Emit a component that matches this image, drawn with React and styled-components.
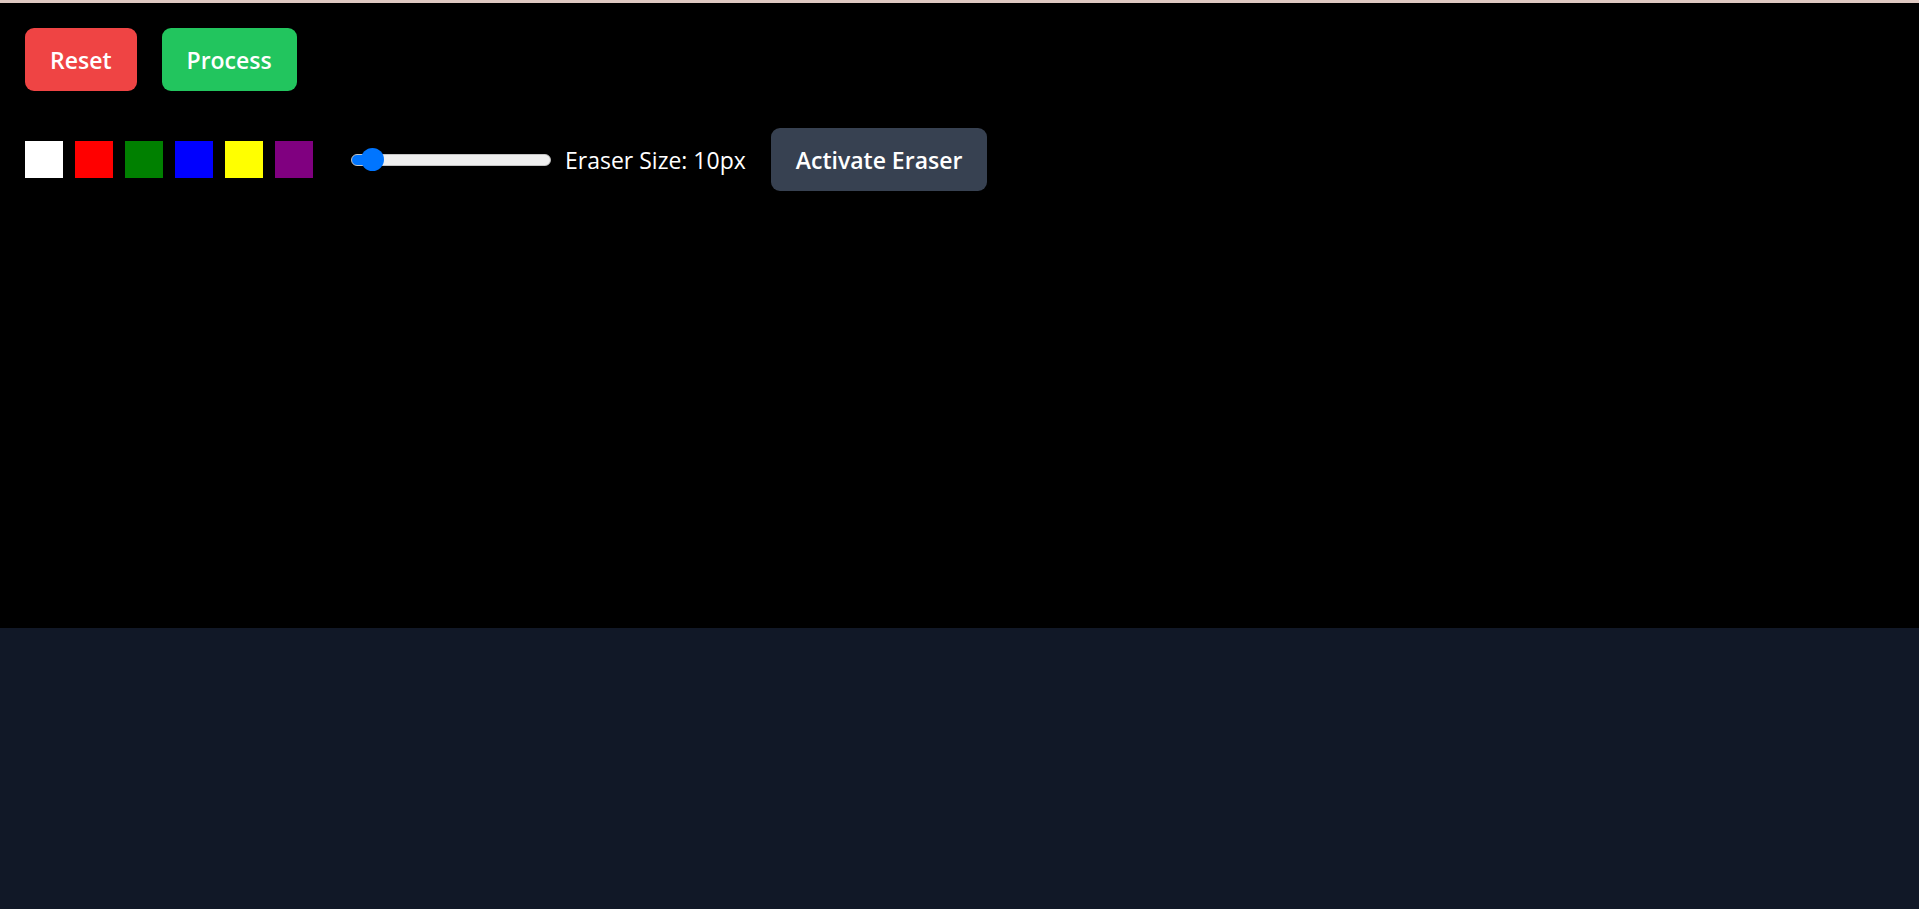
import React, { useState } from "react";
import styled, { createGlobalStyle } from "styled-components";

const colors = ["#ffffff", "#ff0000", "#008000", "#0000ff", "#ffff00", "#800080"];

const GlobalStyle = createGlobalStyle`
  * {
    box-sizing: border-box;
  }
  body {
    margin: 0;
    background: #111827;
    font-family: "Open Sans", "Noto Sans", sans-serif;
  }
`;

const App = () => {
  // eraser size in px, slider goes from 5 to 100
  const [eraserSize, setEraserSize] = useState(10);
  const [color, setColor] = useState("#ffffff");
  const [eraser, setEraser] = useState(false);

  const fill = ((eraserSize - 5) / 95) * 177 + 11.5;

  return (
    <Page>
      <GlobalStyle />
      <Board>
        <ActionRow>
          <ActionButton $bg="#ef4444">Reset</ActionButton>
          <ActionButton $bg="#22c55e">Process</ActionButton>
        </ActionRow>
        <ToolRow>
          {colors.map((c) => (
            <Swatch
              key={c}
              $color={c}
              aria-label={c}
              onClick={() => setColor(c)}
            />
          ))}
          <Slider
            type="range"
            min={5}
            max={100}
            value={eraserSize}
            $fill={fill}
            onChange={(e) => setEraserSize(Number(e.target.value))}
          />
          <SizeLabel>Eraser Size: {eraserSize}px</SizeLabel>
          <ActionButton $bg="#374151" onClick={() => setEraser(!eraser)}>
            {eraser ? "Deactivate Eraser" : "Activate Eraser"}
          </ActionButton>
        </ToolRow>
      </Board>
    </Page>
  );
};

// page wrapper
const Page = styled.div`
  min-height: 100vh;
  border-top: 3px solid #dfc9c2;
  background: #111827;
`;

// black drawing area with the toolbar on top
const Board = styled.div`
  height: 625px;
  background: #000;
  padding: 25px 25px 0;
  display: flex;
  flex-direction: column;
  gap: 37px;
`;

const ActionRow = styled.div`
  display: flex;
  gap: 25px;
`;

const ToolRow = styled.div`
  display: flex;
  align-items: center;
  gap: 12px;
`;

const ActionButton = styled.button`
  height: 63px;
  padding: 0 25px;
  border: none;
  border-radius: 9px;
  background: ${(p) => p.$bg};
  color: #fff;
  font-family: inherit;
  font-size: 23px;
  font-weight: 600;
  cursor: pointer;
`;

const Swatch = styled.button`
  width: 38px;
  height: 37px;
  padding: 0;
  border: none;
  background: ${(p) => p.$color};
  cursor: pointer;
`;

const Slider = styled.input`
  -webkit-appearance: none;
  appearance: none;
  width: 200px;
  height: 24px;
  margin: 0 2px 0 26px;
  background: transparent;
  cursor: pointer;

  &::-webkit-slider-runnable-track {
    box-sizing: border-box;
    height: 12px;
    border-radius: 6px;
    border: 1px solid #c4c4c4;
    background: linear-gradient(
      to right,
      #0075ff 0,
      #0075ff ${(p) => p.$fill}px,
      #efefef ${(p) => p.$fill}px
    );
  }

  &::-webkit-slider-thumb {
    -webkit-appearance: none;
    width: 23px;
    height: 23px;
    margin-top: -6.5px;
    border-radius: 50%;
    background: #0075ff;
    border: none;
  }
`;

const SizeLabel = styled.span`
  color: #fff;
  font-size: 23px;
  margin-right: 13px;
  white-space: nowrap;
`;

export default App;
